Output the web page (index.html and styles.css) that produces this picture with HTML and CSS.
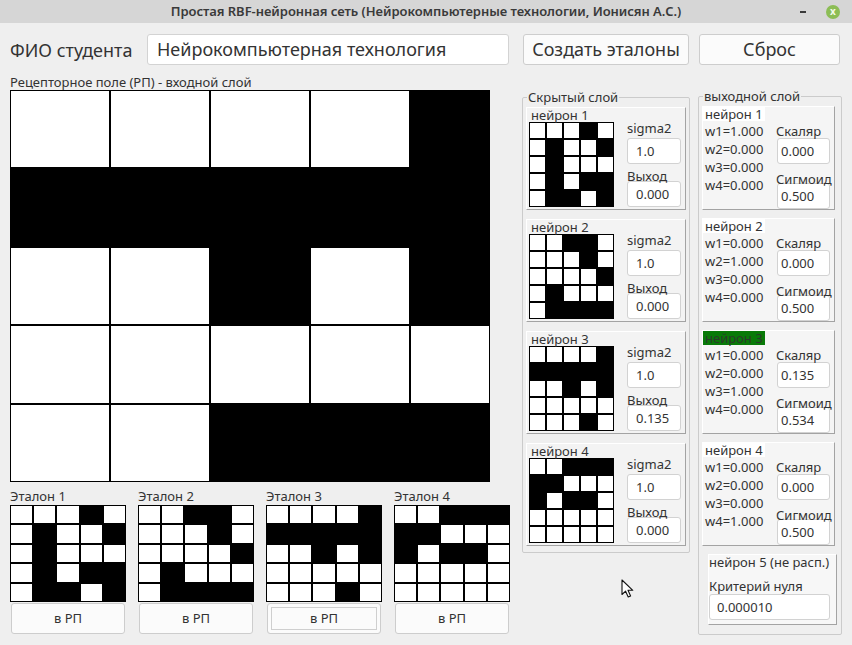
FILE: index.html
```html
<!DOCTYPE html>
<html lang="ru">
<head>
<meta charset="utf-8">
<title>Простая RBF-нейронная сеть</title>
<link rel="stylesheet" href="styles.css">
</head>
<body>
<div class="window">
  <div class="titlebar">
    <div></div>
    <div class="title">Простая RBF-нейронная сеть (Нейрокомпьютерные технологии, Ионисян А.С.)</div>
    <div class="controls">
      <span class="minbtn"></span>
      <span class="closebtn">x</span>
    </div>
  </div>

  <div class="main">
    <div class="toprow">
      <div class="fio-label">ФИО студента</div>
      <div class="fio-input">Нейрокомпьютерная технология</div>
      <div class="btn btn-create">Создать эталоны</div>
      <div class="btn btn-reset">Сброс</div>
    </div>

    <div class="content">
      <div class="leftcol">
        <div class="rp-label">Рецепторное поле (РП) - входной слой</div>
        <div class="biggrid">
          <div class="c"></div><div class="c"></div><div class="c"></div><div class="c"></div><div class="c b"></div>
          <div class="c b"></div><div class="c b"></div><div class="c b"></div><div class="c b"></div><div class="c b"></div>
          <div class="c"></div><div class="c"></div><div class="c b"></div><div class="c"></div><div class="c b"></div>
          <div class="c"></div><div class="c"></div><div class="c"></div><div class="c"></div><div class="c"></div>
          <div class="c"></div><div class="c"></div><div class="c b"></div><div class="c b"></div><div class="c b"></div>
        </div>

        <div class="etalons">
          <div class="etalon">
            <div class="et-label">Эталон 1</div>
            <div class="grid egrid">
              <div class="c"></div><div class="c"></div><div class="c"></div><div class="c b"></div><div class="c"></div>
              <div class="c"></div><div class="c b"></div><div class="c"></div><div class="c"></div><div class="c b"></div>
              <div class="c"></div><div class="c b"></div><div class="c"></div><div class="c"></div><div class="c"></div>
              <div class="c"></div><div class="c b"></div><div class="c"></div><div class="c b"></div><div class="c b"></div>
              <div class="c"></div><div class="c b"></div><div class="c b"></div><div class="c"></div><div class="c b"></div>
            </div>
            <div class="btn et-btn">в РП</div>
          </div>
          <div class="etalon">
            <div class="et-label">Эталон 2</div>
            <div class="grid egrid">
              <div class="c"></div><div class="c"></div><div class="c b"></div><div class="c b"></div><div class="c"></div>
              <div class="c"></div><div class="c"></div><div class="c"></div><div class="c b"></div><div class="c"></div>
              <div class="c"></div><div class="c"></div><div class="c"></div><div class="c"></div><div class="c b"></div>
              <div class="c"></div><div class="c b"></div><div class="c"></div><div class="c"></div><div class="c"></div>
              <div class="c"></div><div class="c b"></div><div class="c b"></div><div class="c b"></div><div class="c b"></div>
            </div>
            <div class="btn et-btn">в РП</div>
          </div>
          <div class="etalon">
            <div class="et-label">Эталон 3</div>
            <div class="grid egrid">
              <div class="c"></div><div class="c"></div><div class="c"></div><div class="c"></div><div class="c b"></div>
              <div class="c b"></div><div class="c b"></div><div class="c b"></div><div class="c b"></div><div class="c b"></div>
              <div class="c"></div><div class="c"></div><div class="c b"></div><div class="c"></div><div class="c b"></div>
              <div class="c"></div><div class="c"></div><div class="c"></div><div class="c"></div><div class="c"></div>
              <div class="c"></div><div class="c"></div><div class="c"></div><div class="c b"></div><div class="c"></div>
            </div>
            <div class="btn et-btn focused">в РП</div>
          </div>
          <div class="etalon">
            <div class="et-label">Эталон 4</div>
            <div class="grid egrid">
              <div class="c"></div><div class="c"></div><div class="c b"></div><div class="c b"></div><div class="c b"></div>
              <div class="c b"></div><div class="c b"></div><div class="c"></div><div class="c"></div><div class="c"></div>
              <div class="c b"></div><div class="c"></div><div class="c b"></div><div class="c b"></div><div class="c"></div>
              <div class="c"></div><div class="c"></div><div class="c"></div><div class="c"></div><div class="c"></div>
              <div class="c"></div><div class="c"></div><div class="c"></div><div class="c"></div><div class="c"></div>
            </div>
            <div class="btn et-btn">в РП</div>
          </div>
        </div>
      </div>

      <fieldset class="group hidden-group">
        <legend>Скрытый слой</legend>

        <div class="hpanel">
          <div class="hleft">
            <div class="ptitle">нейрон 1</div>
            <div class="grid sgrid">
              <div class="c"></div><div class="c"></div><div class="c"></div><div class="c b"></div><div class="c"></div>
              <div class="c"></div><div class="c b"></div><div class="c"></div><div class="c"></div><div class="c b"></div>
              <div class="c"></div><div class="c b"></div><div class="c"></div><div class="c"></div><div class="c"></div>
              <div class="c"></div><div class="c b"></div><div class="c"></div><div class="c b"></div><div class="c b"></div>
              <div class="c"></div><div class="c b"></div><div class="c b"></div><div class="c"></div><div class="c b"></div>
            </div>
          </div>
          <div class="hright">
            <div class="hlab">sigma2</div>
            <div class="box hbox">1.0</div>
            <div class="hlab hlab2">Выход</div>
            <div class="box hbox hbox2">0.000</div>
          </div>
        </div>

        <div class="hpanel">
          <div class="hleft">
            <div class="ptitle">нейрон 2</div>
            <div class="grid sgrid">
              <div class="c"></div><div class="c"></div><div class="c b"></div><div class="c b"></div><div class="c"></div>
              <div class="c"></div><div class="c"></div><div class="c"></div><div class="c b"></div><div class="c"></div>
              <div class="c"></div><div class="c"></div><div class="c"></div><div class="c"></div><div class="c b"></div>
              <div class="c"></div><div class="c b"></div><div class="c"></div><div class="c"></div><div class="c"></div>
              <div class="c"></div><div class="c b"></div><div class="c b"></div><div class="c b"></div><div class="c b"></div>
            </div>
          </div>
          <div class="hright">
            <div class="hlab">sigma2</div>
            <div class="box hbox">1.0</div>
            <div class="hlab hlab2">Выход</div>
            <div class="box hbox hbox2">0.000</div>
          </div>
        </div>

        <div class="hpanel">
          <div class="hleft">
            <div class="ptitle">нейрон 3</div>
            <div class="grid sgrid">
              <div class="c"></div><div class="c"></div><div class="c"></div><div class="c"></div><div class="c b"></div>
              <div class="c b"></div><div class="c b"></div><div class="c b"></div><div class="c b"></div><div class="c b"></div>
              <div class="c"></div><div class="c"></div><div class="c b"></div><div class="c"></div><div class="c b"></div>
              <div class="c"></div><div class="c"></div><div class="c"></div><div class="c"></div><div class="c"></div>
              <div class="c"></div><div class="c"></div><div class="c"></div><div class="c b"></div><div class="c"></div>
            </div>
          </div>
          <div class="hright">
            <div class="hlab">sigma2</div>
            <div class="box hbox">1.0</div>
            <div class="hlab hlab2">Выход</div>
            <div class="box hbox hbox2">0.135</div>
          </div>
        </div>

        <div class="hpanel">
          <div class="hleft">
            <div class="ptitle">нейрон 4</div>
            <div class="grid sgrid">
              <div class="c"></div><div class="c"></div><div class="c b"></div><div class="c b"></div><div class="c b"></div>
              <div class="c b"></div><div class="c b"></div><div class="c"></div><div class="c"></div><div class="c"></div>
              <div class="c b"></div><div class="c"></div><div class="c b"></div><div class="c b"></div><div class="c"></div>
              <div class="c"></div><div class="c"></div><div class="c"></div><div class="c"></div><div class="c"></div>
              <div class="c"></div><div class="c"></div><div class="c"></div><div class="c"></div><div class="c"></div>
            </div>
          </div>
          <div class="hright">
            <div class="hlab">sigma2</div>
            <div class="box hbox">1.0</div>
            <div class="hlab hlab2">Выход</div>
            <div class="box hbox hbox2">0.000</div>
          </div>
        </div>
      </fieldset>

      <fieldset class="group output-group">
        <legend>выходной слой</legend>

        <div class="opanel">
          <span class="otitle">нейрон 1</span>
          <div class="obody">
            <div class="wlist"><div>w1=1.000</div><div>w2=0.000</div><div>w3=0.000</div><div>w4=0.000</div></div>
            <div class="ocol">
              <div class="olab">Скаляр</div>
              <div class="box obox">0.000</div>
              <div class="olab olab2">Сигмоид</div>
              <div class="box obox obox2">0.500</div>
            </div>
          </div>
        </div>

        <div class="opanel">
          <span class="otitle">нейрон 2</span>
          <div class="obody">
            <div class="wlist"><div>w1=0.000</div><div>w2=1.000</div><div>w3=0.000</div><div>w4=0.000</div></div>
            <div class="ocol">
              <div class="olab">Скаляр</div>
              <div class="box obox">0.000</div>
              <div class="olab olab2">Сигмоид</div>
              <div class="box obox obox2">0.500</div>
            </div>
          </div>
        </div>

        <div class="opanel">
          <span class="otitle winner">нейрон 3</span>
          <div class="obody">
            <div class="wlist"><div>w1=0.000</div><div>w2=0.000</div><div>w3=1.000</div><div>w4=0.000</div></div>
            <div class="ocol">
              <div class="olab">Скаляр</div>
              <div class="box obox">0.135</div>
              <div class="olab olab2">Сигмоид</div>
              <div class="box obox obox2">0.534</div>
            </div>
          </div>
        </div>

        <div class="opanel">
          <span class="otitle">нейрон 4</span>
          <div class="obody">
            <div class="wlist"><div>w1=0.000</div><div>w2=0.000</div><div>w3=0.000</div><div>w4=1.000</div></div>
            <div class="ocol">
              <div class="olab">Скаляр</div>
              <div class="box obox">0.000</div>
              <div class="olab olab2">Сигмоид</div>
              <div class="box obox obox2">0.500</div>
            </div>
          </div>
        </div>

        <div class="n5panel">
          <div class="n5title">нейрон 5 (не расп.)</div>
          <div class="n5lab">Критерий нуля</div>
          <div class="box n5box">0.000010</div>
        </div>
      </fieldset>
    </div>
  </div>

  <svg class="cursor" width="14" height="20" viewBox="0 0 14 20">
    <path d="M1 1 L1 15.5 L4.6 12.2 L7.2 18 L9.6 17 L7 11.3 L11.8 11.3 Z" fill="#fff" stroke="#111" stroke-width="1.1" stroke-linejoin="round"/>
  </svg>
</div>
</body>
</html>
```

FILE: styles.css
```css
* { box-sizing: border-box; }

html, body {
  margin: 0;
  padding: 0;
  background: #efefef;
}

body {
  font-family: "Noto Sans", "DejaVu Sans", sans-serif;
  color: #333333;
  font-size: 13px;
}

.window {
  position: relative;
  width: 852px;
  height: 645px;
  background: #efefef;
  overflow: hidden;
}

/* title bar */
.titlebar {
  height: 23px;
  background: #d6d6d6;
  display: grid;
  grid-template-columns: 1fr auto 1fr;
  align-items: center;
}

.title {
  font-size: 13px;
  font-weight: 600;
  letter-spacing: -0.05px;
  color: #3a3a3a;
  white-space: nowrap;
  line-height: 23px;
}

.controls {
  justify-self: end;
  display: flex;
  align-items: center;
  padding-right: 12px;
}

.minbtn {
  width: 6px;
  height: 2px;
  background: #3a3a3a;
  margin-right: 20px;
}

.closebtn {
  width: 14px;
  height: 14px;
  border-radius: 50%;
  background: #8cbd55;
  color: #f3fbe9;
  font-size: 10px;
  font-weight: 700;
  line-height: 13px;
  text-align: center;
}

/* main */
.main {
  padding: 11px 0 0 10px;
}

.toprow {
  display: flex;
  align-items: center;
  height: 31px;
}

.fio-label {
  width: 137px;
  font-size: 18px;
  color: #333;
  white-space: nowrap;
}

.fio-input {
  width: 362px;
  height: 31px;
  background: #fff;
  border: 1px solid #d3d3d3;
  border-radius: 3px;
  padding-left: 9px;
  font-size: 18px;
  line-height: 28px;
  color: #333;
}

.btn {
  background: #fbfbfb;
  border: 1px solid #cdcdcd;
  border-radius: 3px;
  text-align: center;
  color: #333;
}

.btn-create {
  margin-left: 14px;
  width: 166px;
  height: 31px;
  font-size: 18px;
  line-height: 28px;
  white-space: nowrap;
}

.btn-reset {
  margin-left: 10px;
  width: 141px;
  height: 31px;
  font-size: 18px;
  line-height: 28px;
}

.content {
  display: flex;
  align-items: flex-start;
  margin-top: 10px;
}

.leftcol {
  width: 500px;
}

.rp-label {
  line-height: 15px;
  font-size: 13px;
  white-space: nowrap;
}

/* grids */
.biggrid {
  width: 480px;
  height: 392px;
  background: #000;
  padding: 1px;
  display: grid;
  grid-template-columns: 98px 98px 98px 98px 1fr;
  grid-template-rows: repeat(5, 1fr);
  gap: 2px;
}

.grid {
  background: #000;
  padding: 1px;
  display: grid;
  grid-template-columns: repeat(5, 1fr);
  grid-template-rows: repeat(5, 1fr);
  gap: 2px;
}

.c { background: #fff; }
.c.b { background: #000; }

.etalons {
  display: flex;
  gap: 12px;
  margin-top: 7px;
}

.etalon {
  width: 116px;
}

.et-label {
  line-height: 15px;
  font-size: 13px;
  white-space: nowrap;
}

.egrid {
  width: 116px;
  height: 97px;
  margin-top: 1px;
}

.et-btn {
  margin: 1px 0 0 1px;
  width: 114px;
  height: 31px;
  font-size: 13px;
  line-height: 29px;
}

.et-btn.focused {
  box-shadow: inset 0 0 0 3px #fbfbfb, inset 0 0 0 4px #cfcfcf;
}

/* group boxes */
.group {
  margin: 0;
  border: 1px solid #cbcbcb;
  border-radius: 2px;
  min-inline-size: 0;
}

.group legend {
  font-size: 13px;
  line-height: 14px;
  padding: 0 1px;
  margin-left: 1px;
  color: #333;
  white-space: nowrap;
}

.hidden-group {
  margin-left: 12px;
  margin-top: 15px;
  width: 168px;
  padding: 3px 3px 6px 3px;
  display: flex;
  flex-direction: column;
  gap: 9px;
}

.output-group {
  margin-left: 8px;
  margin-top: 15px;
  width: 144px;
  padding: 0 6px 9px 3px;
  display: flex;
  flex-direction: column;
  gap: 8px;
}

.output-group legend {
  line-height: 12px;
  margin-bottom: 4px;
}

/* hidden panels */
.hpanel {
  display: flex;
  width: 160px;
  height: 103px;
  background: #f3f3f3;
  border: 1px solid;
  border-color: #ffffff #a3a3a3 #a3a3a3 #ffffff;
  padding: 0 2px 2px 2px;
}

.ptitle {
  line-height: 14px;
  padding-left: 2px;
  font-size: 13px;
  white-space: nowrap;
}

.sgrid {
  width: 85px;
  height: 85px;
}

.hright {
  margin-left: 13px;
  padding-top: 13px;
}

.hlab {
  line-height: 14px;
  font-size: 13px;
  white-space: nowrap;
}

.hlab2 { margin-top: 5px; }

.box {
  background: #fff;
  border: 1px solid #d2d2d2;
  border-radius: 3px;
  height: 26px;
  font-size: 13px;
  line-height: 24px;
  color: #333;
  white-space: nowrap;
}

.hbox {
  width: 54px;
  margin-top: 3px;
  padding-left: 8px;
}

.hbox2 { margin-top: -2px; }

/* output panels */
.opanel {
  width: 133px;
  height: 104px;
  background: #f5f5f5;
  border: 1px solid;
  border-color: #ffffff #a3a3a3 #a3a3a3 #ffffff;
  line-height: 14px;
}

.otitle {
  display: inline-block;
  vertical-align: top;
  background: #ffffff;
  line-height: 14px;
  padding: 0 2px;
  font-size: 13px;
  white-space: nowrap;
}

.otitle.winner {
  background: #087a08;
  color: #2a3a2a;
}

.obody {
  display: flex;
  margin-top: 1px;
}

.wlist {
  width: 73px;
  padding-left: 2px;
  line-height: 18px;
  font-size: 13px;
  white-space: nowrap;
}

.ocol {
  padding-top: 2px;
}

.olab {
  line-height: 14px;
  font-size: 13px;
  white-space: nowrap;
}

.olab2 { margin-top: 8px; }

.obox {
  width: 53px;
  margin-left: 1px;
  padding-left: 3px;
  line-height: 24px;
}

.obox2 { margin-top: -3px; }

.n5panel {
  margin-left: 6px;
  width: 129px;
  height: 71px;
  background: #f7f7f7;
  border: 1px solid;
  border-color: #ffffff #a3a3a3 #a3a3a3 #ffffff;
  padding-left: 0;
}

.n5title {
  line-height: 14px;
  font-size: 13px;
  white-space: nowrap;
}

.n5lab {
  margin-top: 10px;
  line-height: 14px;
  font-size: 13px;
  white-space: nowrap;
}

.n5box {
  margin-top: 1px;
  width: 121px;
  padding-left: 7px;
}

/* mouse pointer overlay */
.cursor {
  position: absolute;
  left: 621px;
  top: 579px;
}
```
